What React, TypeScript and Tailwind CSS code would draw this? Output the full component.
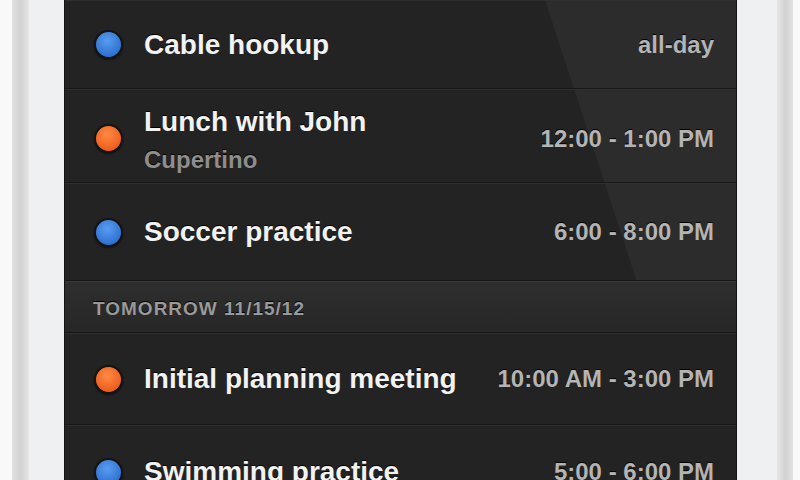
import React from "react";

type Item = {
  title: string;
  sub?: string;
  time: string;
  color: "blue" | "orange";
  h: string;
};

const today: Item[] = [
  { title: "Cable hookup", time: "all-day", color: "blue", h: "h-[89px]" },
  { title: "Lunch with John", sub: "Cupertino", time: "12:00 - 1:00 PM", color: "orange", h: "h-[94px] pt-[5px]" },
  { title: "Soccer practice", time: "6:00 - 8:00 PM", color: "blue", h: "h-[98px]" },
];

const tomorrow: Item[] = [
  { title: "Initial planning meeting", time: "10:00 AM - 3:00 PM", color: "orange", h: "h-[92px]" },
  { title: "Swimming practice", time: "5:00 - 6:00 PM", color: "blue", h: "h-[94px]" },
];

function Dot({ color }: { color: "blue" | "orange" }) {
  const fill =
    color === "blue"
      ? "bg-[radial-gradient(circle_at_45%_35%,#5a9cf0,#2f72d2_70%)]"
      : "bg-[radial-gradient(circle_at_45%_35%,#ff8a45,#ee5f1c_70%)]";
  return (
    <span
      className={`block w-[25px] h-[25px] shrink-0 rounded-full ${fill} shadow-[0_0_0_2px_#141414,0_1px_2px_2px_rgba(0,0,0,0.5)]`}
    />
  );
}

function Row({ item }: { item: Item }) {
  return (
    <div
      className={`${item.h} flex items-center pl-[31px] pr-[22px] border-t border-t-[#2f2f2f] border-b border-b-[#171717]`}
    >
      <Dot color={item.color} />
      <div className={`ml-[23px] flex-1 flex flex-col ${item.sub ? "mt-[7px]" : ""}`}>
        <span className="text-[28px] leading-[36px] font-bold text-[#f2f2f2] [text-shadow:0_-1px_0_#000]">
          {item.title}
        </span>
        {item.sub && (
          <span className="text-[24px] leading-[40px] font-bold text-[#8e8e8e] [text-shadow:0_-1px_0_#000]">
            {item.sub}
          </span>
        )}
      </div>
      <span className="text-[24px] font-bold text-[#b4b4b4] [text-shadow:0_-1px_0_#000]">
        {item.time}
      </span>
    </div>
  );
}

export default function App() {
  return (
    <div className="w-[800px] h-[480px] overflow-hidden flex bg-white font-['Liberation_Sans',Arial,sans-serif]">
      {/* left bezel */}
      <div className="flex shrink-0">
        <div className="w-[12px] bg-[#f9f9f9]" />
        <div className="w-[17px] bg-gradient-to-r from-[#e2e2e2] via-[#d2d2d2] to-[#e6e6e6]" />
        <div className="w-[35px] bg-[#eef0f2]" />
      </div>

      {/* list */}
      <div className="relative flex-1 bg-[#232323] border-x border-[#141414] overflow-hidden">
        <div className="absolute inset-0 bg-white/[0.045] pointer-events-none [clip-path:polygon(480px_0,100%_0,100%_282px,572px_282px)]" />
        <div className="relative flex flex-col">
          {today.map((it) => (
            <Row key={it.title} item={it} />
          ))}
          <div className="h-[52px] flex items-center pl-[28px] pt-[5px] bg-gradient-to-b from-[#2e2e2e] to-[#272727] border-t border-t-[#3a3a3a] border-b border-b-[#141414]">
            <span className="text-[19px] tracking-[1px] font-bold text-[#9a9a9a] [text-shadow:0_-1px_0_#000]">
              TOMORROW 11/15/12
            </span>
          </div>
          {tomorrow.map((it) => (
            <Row key={it.title} item={it} />
          ))}
        </div>
      </div>

      {/* right bezel */}
      <div className="flex shrink-0">
        <div className="w-[40px] bg-[#eef0f2]" />
        <div className="w-[16px] bg-gradient-to-r from-[#e6e6e6] via-[#d2d2d2] to-[#e2e2e2]" />
        <div className="w-[7px] bg-[#f9f9f9]" />
      </div>
    </div>
  );
}
